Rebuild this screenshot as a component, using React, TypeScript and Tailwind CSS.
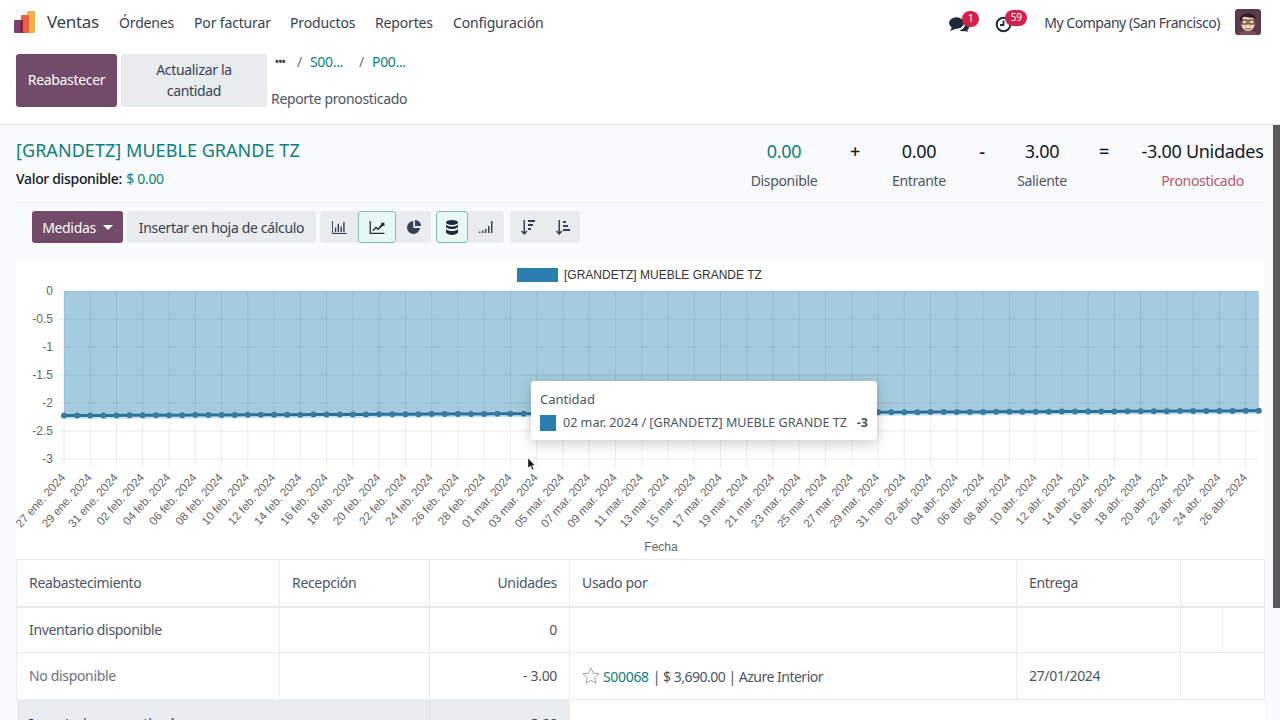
import { Fragment } from "react";

const menu = [
  { label: "Órdenes", w: "w-[75px]" },
  { label: "Por facturar", w: "w-[96px]" },
  { label: "Productos", w: "w-[85px]" },
  { label: "Reportes", w: "w-[78px]" },
  { label: "Configuración", w: "w-[100px]" },
];

const months = ["ene", "feb", "mar", "abr"];

function tickLabels() {
  const out: string[] = [];
  for (let i = 0; i < 46; i++) {
    const d = new Date(2024, 0, 27 + i * 2);
    out.push(`${String(d.getDate()).padStart(2, "0")} ${months[d.getMonth()]}. 2024`);
  }
  return out;
}

const X0 = 48;
const STEP = 13.13;
const Y0 = 31;
const UNIT = 56;
const AXIS_FONT = "Liberation Sans, Arial, sans-serif";

function lineY(i: number) {
  return 155.6 - (i / 91) * 4.8;
}

function Chart() {
  const pts = Array.from({ length: 92 }, (_, i) => [X0 + i * STEP, lineY(i)]);
  const path = pts.map((p) => p.join(",")).join(" ");
  const back = [...pts].reverse().map((p) => p.join(",")).join(" ");
  const glow = pts.map((p) => `${p[0]},${p[1] + 2.5}`).join(" ");
  const right = pts[91][0];
  const labels = tickLabels();
  const yLabels = ["0", "-0.5", "-1", "-1.5", "-2", "-2.5", "-3"];
  return (
    <svg width="1248" height="299" viewBox="0 0 1248 299" className="block tracking-normal">
      <rect x="501" y="8" width="41" height="14" fill="#2a7fae" />
      <text x="548" y="19" fontSize="12" fill="#333" fontFamily={AXIS_FONT}>
        [GRANDETZ] MUEBLE GRANDE TZ
      </text>
      <polygon points={`${X0},${Y0} ${right},${Y0} ${back}`} fill="#a5cbde" />
      <polyline points={glow} fill="none" stroke="#c4e6f4" strokeWidth="2" />
      {yLabels.map((l, i) => (
        <Fragment key={l}>
          <line x1={X0 - 6} x2={right} y1={Y0 + (i * UNIT) / 2} y2={Y0 + (i * UNIT) / 2} stroke="#000" strokeOpacity="0.07" />
          <text x={X0 - 11} y={Y0 + (i * UNIT) / 2 + 4} textAnchor="end" fontSize="12" fill="#666" fontFamily={AXIS_FONT}>
            {l}
          </text>
        </Fragment>
      ))}
      {labels.map((l, i) => {
        const x = X0 + i * 2 * STEP;
        return (
          <Fragment key={l}>
            <line x1={x} x2={x} y1={Y0} y2={Y0 + 176} stroke="#000" strokeOpacity="0.07" />
            <text
              x={x + 2}
              y={Y0 + 187}
              textAnchor="end"
              fontSize="11.6"
              fill="#666"
              fontFamily={AXIS_FONT}
              transform={`rotate(-48 ${x + 2} ${Y0 + 187})`}
            >
              {l}
            </text>
          </Fragment>
        );
      })}
      <polyline points={path} fill="none" stroke="#2a6f97" strokeWidth="3" />
      {pts.map((p, i) => (
        <circle key={i} cx={p[0]} cy={p[1]} r="3" fill="#3b7a9c" />
      ))}
      <text x="645" y="291" textAnchor="middle" fontSize="12" fill="#666" fontFamily={AXIS_FONT}>
        Fecha
      </text>
    </svg>
  );
}

function GraphBtn({ active, children, w }: { active?: boolean; children: React.ReactNode; w: string }) {
  return (
    <div
      className={`flex h-[32px] ${w} items-center justify-center ${
        active ? "rounded-[3px] border border-[#7dbcb4] bg-[#e8f6f4]" : "bg-[#e9ecef]"
      }`}
    >
      {children}
    </div>
  );
}

function Metric({ value, label, color, labelColor, w }: { value: string; label: string; color: string; labelColor: string; w: string }) {
  return (
    <div className={`flex ${w} flex-col items-center whitespace-nowrap`}>
      <div className={`mt-[1px] text-[18px] leading-[27px] tracking-[-0.3px] ${color}`}>{value}</div>
      <div className={`mt-[5px] text-[14px] leading-[21px] ${labelColor}`}>{label}</div>
    </div>
  );
}

function Op({ children, w }: { children: React.ReactNode; w: string }) {
  return <div className={`${w} mt-[1px] text-center text-[18px] font-medium leading-[27px] text-[#111827]`}>{children}</div>;
}

export default function App() {
  return (
    <div className="flex h-screen w-full flex-col overflow-hidden bg-white text-[14px] tracking-[-0.33px] text-[#4b5563] [font-family:'Noto_Sans',sans-serif]">
      <nav className="flex h-[46px] shrink-0 items-center pb-[2px]">
        <svg width="22" height="23" viewBox="0 0 22 23" className="ml-[14px]">
          <rect x="13" y="0" width="8" height="22" rx="1" fill="#f3b04a" />
          <rect x="7" y="4" width="8" height="18" rx="1" fill="#e8623e" />
          <rect x="0" y="9" width="8" height="13" rx="1" fill="#7d3f6b" />
          <rect x="6" y="9" width="3" height="13" fill="#8f1f45" />
        </svg>
        <span className="ml-[11px] w-[72px] text-[17px] text-[#374151]">Ventas</span>
        <div className="flex text-[#374151]">
          {menu.map((m) => (
            <span key={m.label} className={`${m.w} whitespace-nowrap text-[14px] tracking-[-0.15px]`}>
              {m.label}
            </span>
          ))}
        </div>
        <div className="ml-auto flex items-center">
          <div className="relative mr-[26px]">
            <svg width="20" height="15" viewBox="0 0 20 15" className="mt-[4px]">
              <path d="M16 6c2.500 1 4 2.500 4 4.300 0 1.200-.7 2.200-1.800 3l1 1.700-3.400-1c-2 .5-4 .2-5.600-.8 4-.3 6.200-3.600 5.800-7.200z" fill="#1f2937" />
              <ellipse cx="7.500" cy="6" rx="7.500" ry="5.800" fill="#1f2937" />
              <path d="M3 10 L1 14 L7.500 11.500 Z" fill="#1f2937" />
            </svg>
            <span className="absolute left-[13px] top-[-2px] flex h-[16px] w-[17px] items-center justify-center rounded-full bg-[#d3224a] text-[10px] text-white">1</span>
          </div>
          <div className="relative mr-[32px]">
            <svg width="17" height="17" viewBox="0 0 17 17" className="mt-[4px]">
              <circle cx="8.500" cy="8.500" r="6.800" fill="none" stroke="#1f2937" strokeWidth="2" />
              <path d="M8.500 4.500 V9 H5" fill="none" stroke="#1f2937" strokeWidth="1.800" />
            </svg>
            <span className="absolute left-[10px] top-[-2px] flex h-[16px] w-[22px] items-center justify-center rounded-full bg-[#d3224a] text-[10px] text-white">59</span>
          </div>
          <span className="mr-[15px] whitespace-nowrap text-[14px] tracking-[-0.45px] text-[#374151]">My Company (San Francisco)</span>
          <svg width="26" height="26" viewBox="0 0 26 26" className="mr-[19px]">
            <rect width="26" height="26" rx="3" fill="#5b3a4c" />
            <path d="M4 26 C5 20 21 20 22 26 Z" fill="#7c4f5f" />
            <ellipse cx="13" cy="14" rx="7" ry="8" fill="#f2cfb2" />
            <path d="M5 11 C5 3 21 2 21 11 L19 9 C15 9 10 7 8 8 L6 13 Z" fill="#2b1d1d" />
            <rect x="7" y="11" width="5" height="4" fill="none" stroke="#222" />
            <rect x="14" y="11" width="5" height="4" fill="none" stroke="#222" />
            <path d="M10 19 C12 20.500 14 20.500 16 19" fill="none" stroke="#8a4a3a" />
          </svg>
        </div>
      </nav>

      <div className="flex h-[79px] shrink-0 border-b border-[#e5e7eb] pl-[16px] pt-[8px]">
        <button className="h-[53px] w-[101px] rounded-[3px] bg-[#714b67] pb-[2px] text-[14px] text-white">Reabastecer</button>
        <button className="ml-[4px] h-[53px] w-[146px] rounded-[3px] bg-[#e9ecef] px-4 pb-[1px] text-[14px] leading-[21px] text-[#374151]">
          Actualizar la cantidad
        </button>
        <div className="ml-[4px] -mt-[3px] flex flex-col">
          <div className="flex h-[20px] items-center pl-[4px] text-[14px]">
            <span className="w-[22px] text-[10px] font-bold leading-[10px] text-[#374151]">•••</span>
            <span className="w-[13px] text-[#6b7280]">/</span>
            <span className="w-[49px] text-[#0b7f7c]">S00...</span>
            <span className="w-[13px] text-[#6b7280]">/</span>
            <span className="text-[#0b7f7c]">P00...</span>
          </div>
          <div className="mt-[17px] whitespace-nowrap text-[14px] text-[#4b5563]">Reporte pronosticado</div>
        </div>
      </div>

      <div className="flex min-h-0 flex-1 bg-[#f9fafb]">
        <main className="min-w-0 flex-1 pl-[16px]">
          <div className="flex h-[78px] items-start justify-between border-b border-[#e9ecef] pt-[12px]">
            <div>
              <h1 className="text-[18px] leading-[27px] tracking-[0.05px] text-[#0b7f7c]">[GRANDETZ] MUEBLE GRANDE TZ</h1>
              <div className="mt-[4px] text-[14px] leading-[21px] text-[#111827]">
                <span className="mr-[1px] font-medium">Valor disponible:</span> <span className="text-[#0b7f7c]">$ 0.00</span>
              </div>
            </div>
            <div className="flex">
              <Metric w="w-[94px]" value="0.00" label="Disponible" color="text-[#0b7f7c]" labelColor="text-[#4b5563]" />
              <Op w="w-[48px]">+</Op>
              <Metric w="w-[80px]" value="0.00" label="Entrante" color="text-[#111827]" labelColor="text-[#4b5563]" />
              <Op w="w-[46px]">-</Op>
              <Metric w="w-[74px]" value="3.00" label="Saliente" color="text-[#111827]" labelColor="text-[#4b5563]" />
              <Op w="w-[62px] pr-[12px]">=</Op>
              <Metric w="w-[123px]" value="-3.00 Unidades" label="Pronosticado" color="text-[#111827]" labelColor="text-[#b5566e]" />
            </div>
          </div>

          <div className="flex h-[57px] items-start pl-[16px] pt-[8px]">
            <button className="flex h-[32px] w-[91px] items-center justify-center gap-[7px] rounded-[3px] bg-[#714b67] text-[14px] text-white">
              Medidas
              <span className="h-0 w-0 border-x-[5px] border-t-[5px] border-x-transparent border-t-white" />
            </button>
            <button className="ml-[4px] h-[32px] w-[189px] rounded-[3px] bg-[#e9ecef] text-[14px] text-[#374151]">
              Insertar en hoja de cálculo
            </button>
            <div className="ml-[4px] flex overflow-hidden rounded-[3px]">
              <GraphBtn w="w-[38px]">
                <svg width="15" height="13" viewBox="0 0 16 14" fill="#374151"><path d="M0 0h1v13h15v1H0z" /><path d="M3 7h1.500v5H3zM6 3h1.500v9H6zM9 6h1.500v6H9zM12 1h1.500v11H12z" /></svg>
              </GraphBtn>
              <GraphBtn active w="w-[38px]">
                <svg width="16" height="13" viewBox="0 0 16 14" fill="#1f2937"><path d="M0 0h1.400v12.600H16V14H0z" /><path d="M3 10 7 6l2 2 4-5-1.400-1H16v4l-1.200-1.200L9 10 7 8l-3 3z" /></svg>
              </GraphBtn>
              <GraphBtn w="w-[35px]">
                <svg width="14" height="14" viewBox="0 0 14 14" fill="#374151"><path d="M6.300 1A6.500 6.500 0 1 0 13 8H6.300z" /><path d="M8 0a6 6 0 0 1 6 6H8z" /></svg>
              </GraphBtn>
            </div>
            <div className="ml-[5px] flex overflow-hidden rounded-[3px]">
              <GraphBtn active w="w-[32px]">
                <svg width="12" height="15" viewBox="0 0 12 15" fill="#1f2937"><ellipse cx="6" cy="2.500" rx="6" ry="2.500" /><path d="M0 4.500C1 6 3.500 6.500 6 6.500S11 6 12 4.500V7c-1 1.500-3.500 2-6 2S1 8.500 0 7zM0 9c1 1.500 3.500 2 6 2s5-.5 6-2v3.500C11 14 8.500 15 6 15s-5-1-6-2.500z" /></svg>
              </GraphBtn>
              <GraphBtn w="w-[36px]">
                <svg width="14" height="12" viewBox="0 0 14 12" fill="#374151"><path d="M0 10.500h1.500V12H0zM3 9.500h1.500V12H3zM6 8h1.500v4H6zM9 5h1.500v7H9zM12 0h1.500v12H12z" /></svg>
              </GraphBtn>
            </div>
            <div className="ml-[6px] flex overflow-hidden rounded-[3px]">
              <GraphBtn w="w-[35px]">
                <svg width="14" height="15" viewBox="0 0 14 15" fill="#374151"><path d="M2.500 0H4v12l1.500-1.500L6.500 11.500 3.200 15 0 11.500l1-1L2.500 12zM7 0h7v2H7zM7 4h5v2H7zM7 8h3v2H7z" /></svg>
              </GraphBtn>
              <GraphBtn w="w-[35px]">
                <svg width="14" height="15" viewBox="0 0 14 15" fill="#374151"><path d="M2.500 0H4v12l1.500-1.500L6.500 11.500 3.200 15 0 11.500l1-1L2.500 12zM7 1h3v2H7zM7 5h5v2H7zM7 9h7v2H7z" /></svg>
              </GraphBtn>
            </div>
          </div>

          <div className="relative bg-white">
            <Chart />
            <div className="absolute left-[515px] top-[121px] h-[59px] w-[346px] rounded-[3px] bg-white px-[9px] pt-[9px] tracking-normal shadow-[0_4px_14px_rgba(0,0,0,0.2)]">
              <div className="text-[13px] leading-[18px] text-[#4b5563]">Cantidad</div>
              <div className="mt-[6px] flex items-center whitespace-nowrap text-[12.6px] text-[#4b5563]">
                <span className="mr-[7px] h-[16px] w-[16px] bg-[#2a7fae]" />
                <span className="w-[295px]">02 mar. 2024 / [GRANDETZ] MUEBLE GRANDE TZ</span>
                <span className="font-bold">-3</span>
              </div>
            </div>
            <svg width="9" height="14" viewBox="0 0 9 14" className="absolute left-[511px] top-[197px]">
              <path d="M1 1v10l2.500-2 2 4 1.500-.8-2-3.700H8z" fill="#111" stroke="#fff" strokeWidth="0.5" />
            </svg>
          </div>

          <table className="w-full table-fixed border-collapse bg-white text-[14px] text-[#4b5563]">
            <colgroup>
              <col className="w-[263px]" />
              <col className="w-[150px]" />
              <col className="w-[140px]" />
              <col className="w-[447px]" />
              <col className="w-[164px]" />
              <col className="w-[42px]" />
              <col className="w-[42px]" />
            </colgroup>
            <thead>
              <tr className="h-[47px] border-b-2 border-[#e5e7eb]">
                <th className="border border-[#e9ecef] pb-[1px] pl-[12px] text-left font-normal">Reabastecimiento</th>
                <th className="border border-[#e9ecef] pb-[1px] pl-[12px] text-left font-normal">Recepción</th>
                <th className="border border-[#e9ecef] pb-[1px] pr-[12px] text-right font-normal">Unidades</th>
                <th className="border border-[#e9ecef] pb-[1px] pl-[12px] text-left font-normal">Usado por</th>
                <th className="border border-[#e9ecef] pb-[1px] pl-[12px] text-left font-normal">Entrega</th>
                <th colSpan={2} className="border border-[#e9ecef]" />
              </tr>
            </thead>
            <tbody>
              <tr className="h-[46px]">
                <td className="border border-[#e9ecef] pl-[12px]">Inventario disponible</td>
                <td className="border border-[#e9ecef]" />
                <td className="border border-[#e9ecef] pr-[12px] text-right">0</td>
                <td className="border border-[#e9ecef]" />
                <td className="border border-[#e9ecef]" />
                <td className="border border-[#e9ecef]" />
                <td className="border border-[#e9ecef]" />
              </tr>
              <tr className="h-[47px]">
                <td className="border border-[#e9ecef] pb-[1px] pl-[12px] text-[#6b7280]">No disponible</td>
                <td className="border border-[#e9ecef]" />
                <td className="border border-[#e9ecef] pb-[1px] pr-[12px] text-right">- 3.00</td>
                <td className="border border-[#e9ecef] pl-[12px]">
                  <span className="flex items-center">
                    <svg width="18" height="17" viewBox="0 0 18 17" fill="none" stroke="#9ca3af" className="mb-[2px] mr-[3px]">
                      <path d="M9 1l2.400 5.200 5.600.6-4.200 3.800 1.200 5.600L9 13.400l-5 2.800 1.200-5.600L1 6.800l5.600-.6z" />
                    </svg>
                    <span className="text-[#0b7f7c]">S00068</span>
                    <span className="ml-[4px] tracking-[-0.5px]">| $ 3,690.00 | Azure Interior</span>
                  </span>
                </td>
                <td className="border border-[#e9ecef] pb-[1px] pl-[12px]">27/01/2024</td>
                <td colSpan={2} className="border border-[#e9ecef]" />
              </tr>
              <tr className="h-[46px] align-top">
                <td colSpan={2} className="bg-[#e9ecef] pl-[12px] pt-[13px] font-medium text-[#374151]">Inventario pronosticado</td>
                <td className="border-l border-[#dee2e6] bg-[#e9ecef] pr-[12px] pt-[13px] text-right font-medium text-[#374151]">-3.00</td>
                <td colSpan={4} />
              </tr>
            </tbody>
          </table>
        </main>
        <div className="ml-[9px] w-[7px] shrink-0">
          <div className="h-[483px] bg-[#5a5a5a]" />
        </div>
      </div>
    </div>
  );
}
